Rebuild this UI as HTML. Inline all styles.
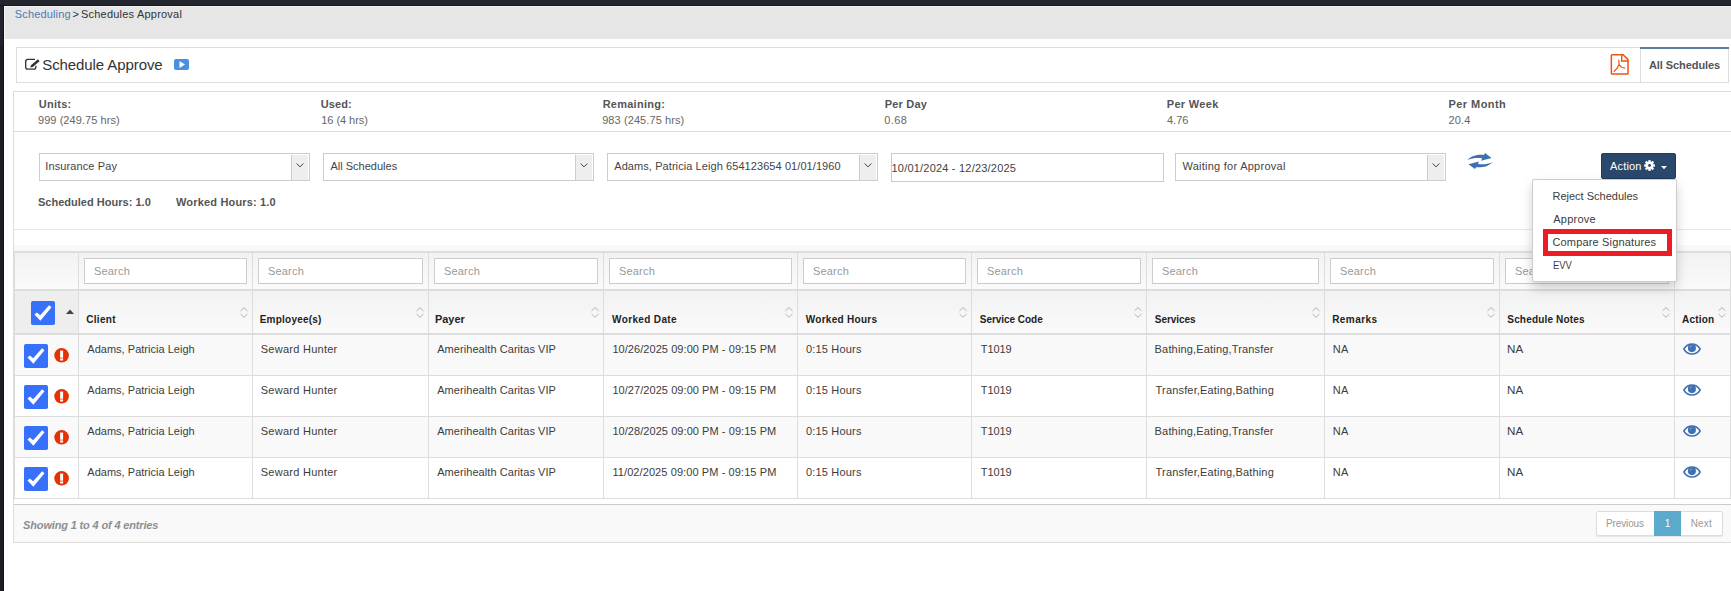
<!DOCTYPE html>
<html>
<head>
<meta charset="utf-8">
<title>Schedule Approve</title>
<style>
*{box-sizing:border-box;margin:0;padding:0}
svg{display:block}
html,body{width:1731px;height:591px;overflow:hidden;background:#fff}
body{font-family:"Liberation Sans",sans-serif;font-size:11px;color:#444;position:relative}
.abs{position:absolute}
.t{position:absolute;white-space:nowrap;line-height:1}
/* chrome */
#topbar{left:0;top:0;width:1731px;height:6px;background:#23262f;border-bottom:1px solid #13151d}
#leftbar{left:0;top:6px;width:4px;height:585px;background:#1b1d23;border-right:1px solid #10121a}
#leftbar2{left:0;top:6px;width:3px;height:40px;background:#20232c}
#crumb{left:4px;top:6px;width:1727px;height:33px;background:#e6e6e6;border-top:1px solid #f6f6f6;border-left:1px solid #f6f6f6}
/* title panel */
#titlep{left:16px;top:47px;width:1713px;height:36px;border:1px solid #ddd;background:#fff}
#tab{left:1640px;top:47px;width:89px;height:2px;background:#5d7f9d}
#tabl{left:1640px;top:49px;width:1px;height:33px;background:#ddd}
/* stats + filter panel */
#panel{left:13px;top:91px;width:1718px;height:452px;border-left:1px solid #ddd;border-top:1px solid #ddd}
.hl{position:absolute;height:1px;background:#ddd}
.b{font-weight:bold}
/* selects */
.sel{position:absolute;top:153px;height:28px;border:1px solid #ccc;background:#fff}
.sel .arr{position:absolute;right:1px;top:1px;width:18px;height:25px;background:#eee;border-left:1px solid #ccc}
.sel svg{position:absolute;left:5px;top:8px}
/* table */
#tbl{left:14px;top:245px}
.cell{position:absolute;border-right:1px solid #ddd}
.sin{position:absolute;top:258px;height:26px;border:1px solid #ccc;background:#fff}
.sort{position:absolute;top:306px}
</style>
</head>
<body>
<div id="topbar" class="abs"></div>
<div id="leftbar" class="abs"></div><div id="leftbar2" class="abs"></div>
<div id="crumb" class="abs"></div>
<div id="titlep" class="abs"></div>
<div id="tab" class="abs"></div><div id="tabl" class="abs"></div>
<div id="panel" class="abs"></div>
<div class="abs " style="left:14px;top:131px;width:1717px;height:1px;background:#ddd"></div>
<div class="abs " style="left:14px;top:229px;width:1717px;height:1px;background:#e7e7e7"></div>
<div class="abs " style="left:14px;top:245px;width:1717px;height:6px;background:#f9f9f9"></div>
<div class="abs " style="left:14px;top:251px;width:1717px;height:2px;background:#ddd"></div>
<div class="abs " style="left:14px;top:253px;width:1px;height:246px;background:#ddd"></div>
<div class="abs " style="left:15px;top:253px;width:1716px;height:36px;background:linear-gradient(#f2f2f2,#fafafa)"></div>
<div class="abs " style="left:14px;top:289px;width:1717px;height:2px;background:#ddd"></div>
<div class="abs " style="left:15px;top:291px;width:1716px;height:42px;background:linear-gradient(#f2f2f2,#fafafa)"></div>
<div class="abs " style="left:15px;top:291px;width:63px;height:42px;background:#eee"></div>
<div class="abs " style="left:14px;top:333px;width:1717px;height:2px;background:#ddd"></div>
<div class="abs " style="left:15px;top:335px;width:1716px;height:40px;background:#f9f9f9"></div>
<div class="abs " style="left:14px;top:375px;width:1717px;height:1px;background:#ddd"></div>
<div class="abs " style="left:15px;top:376px;width:1716px;height:40px;background:#fff"></div>
<div class="abs " style="left:14px;top:416px;width:1717px;height:1px;background:#ddd"></div>
<div class="abs " style="left:15px;top:417px;width:1716px;height:40px;background:#f9f9f9"></div>
<div class="abs " style="left:14px;top:457px;width:1717px;height:1px;background:#ddd"></div>
<div class="abs " style="left:15px;top:458px;width:1716px;height:40px;background:#fff"></div>
<div class="abs " style="left:14px;top:498px;width:1717px;height:1px;background:#ddd"></div>
<div class="abs " style="left:78px;top:253px;width:1px;height:245px;background:#ddd"></div>
<div class="abs " style="left:252px;top:253px;width:1px;height:245px;background:#ddd"></div>
<div class="abs " style="left:428px;top:253px;width:1px;height:245px;background:#ddd"></div>
<div class="abs " style="left:603px;top:253px;width:1px;height:245px;background:#ddd"></div>
<div class="abs " style="left:797px;top:253px;width:1px;height:245px;background:#ddd"></div>
<div class="abs " style="left:971px;top:253px;width:1px;height:245px;background:#ddd"></div>
<div class="abs " style="left:1146px;top:253px;width:1px;height:245px;background:#ddd"></div>
<div class="abs " style="left:1324px;top:253px;width:1px;height:245px;background:#ddd"></div>
<div class="abs " style="left:1499px;top:253px;width:1px;height:245px;background:#ddd"></div>
<div class="abs " style="left:1674px;top:253px;width:1px;height:245px;background:#ddd"></div>
<div class="abs " style="left:1730px;top:253px;width:1px;height:245px;background:#ddd"></div>
<div class="abs " style="left:84px;top:258px;width:163px;height:26px;border:1px solid #ccc;background:#fff"></div>
<div class="abs " style="left:258px;top:258px;width:165px;height:26px;border:1px solid #ccc;background:#fff"></div>
<div class="abs " style="left:434px;top:258px;width:164px;height:26px;border:1px solid #ccc;background:#fff"></div>
<div class="abs " style="left:609px;top:258px;width:183px;height:26px;border:1px solid #ccc;background:#fff"></div>
<div class="abs " style="left:803px;top:258px;width:163px;height:26px;border:1px solid #ccc;background:#fff"></div>
<div class="abs " style="left:977px;top:258px;width:164px;height:26px;border:1px solid #ccc;background:#fff"></div>
<div class="abs " style="left:1152px;top:258px;width:167px;height:26px;border:1px solid #ccc;background:#fff"></div>
<div class="abs " style="left:1330px;top:258px;width:164px;height:26px;border:1px solid #ccc;background:#fff"></div>
<div class="abs " style="left:1505px;top:258px;width:164px;height:26px;border:1px solid #ccc;background:#fff"></div>
<div class="abs" style="left:240px;top:306.5px;width:8px;height:11px;line-height:0"><svg width="8" height="11" viewBox="0 0 8 11"><path d="M0.5 3.9 L4 0.6 L7.5 3.9 M0.5 7 L4 10.3 L7.5 7" fill="none" stroke="#b4b4b4" stroke-width="1"/></svg></div>
<div class="abs" style="left:416px;top:306.5px;width:8px;height:11px;line-height:0"><svg width="8" height="11" viewBox="0 0 8 11"><path d="M0.5 3.9 L4 0.6 L7.5 3.9 M0.5 7 L4 10.3 L7.5 7" fill="none" stroke="#b4b4b4" stroke-width="1"/></svg></div>
<div class="abs" style="left:591px;top:306.5px;width:8px;height:11px;line-height:0"><svg width="8" height="11" viewBox="0 0 8 11"><path d="M0.5 3.9 L4 0.6 L7.5 3.9 M0.5 7 L4 10.3 L7.5 7" fill="none" stroke="#b4b4b4" stroke-width="1"/></svg></div>
<div class="abs" style="left:785px;top:306.5px;width:8px;height:11px;line-height:0"><svg width="8" height="11" viewBox="0 0 8 11"><path d="M0.5 3.9 L4 0.6 L7.5 3.9 M0.5 7 L4 10.3 L7.5 7" fill="none" stroke="#b4b4b4" stroke-width="1"/></svg></div>
<div class="abs" style="left:959px;top:306.5px;width:8px;height:11px;line-height:0"><svg width="8" height="11" viewBox="0 0 8 11"><path d="M0.5 3.9 L4 0.6 L7.5 3.9 M0.5 7 L4 10.3 L7.5 7" fill="none" stroke="#b4b4b4" stroke-width="1"/></svg></div>
<div class="abs" style="left:1134px;top:306.5px;width:8px;height:11px;line-height:0"><svg width="8" height="11" viewBox="0 0 8 11"><path d="M0.5 3.9 L4 0.6 L7.5 3.9 M0.5 7 L4 10.3 L7.5 7" fill="none" stroke="#b4b4b4" stroke-width="1"/></svg></div>
<div class="abs" style="left:1312px;top:306.5px;width:8px;height:11px;line-height:0"><svg width="8" height="11" viewBox="0 0 8 11"><path d="M0.5 3.9 L4 0.6 L7.5 3.9 M0.5 7 L4 10.3 L7.5 7" fill="none" stroke="#b4b4b4" stroke-width="1"/></svg></div>
<div class="abs" style="left:1487px;top:306.5px;width:8px;height:11px;line-height:0"><svg width="8" height="11" viewBox="0 0 8 11"><path d="M0.5 3.9 L4 0.6 L7.5 3.9 M0.5 7 L4 10.3 L7.5 7" fill="none" stroke="#b4b4b4" stroke-width="1"/></svg></div>
<div class="abs" style="left:1662px;top:306.5px;width:8px;height:11px;line-height:0"><svg width="8" height="11" viewBox="0 0 8 11"><path d="M0.5 3.9 L4 0.6 L7.5 3.9 M0.5 7 L4 10.3 L7.5 7" fill="none" stroke="#b4b4b4" stroke-width="1"/></svg></div>
<div class="abs" style="left:1718px;top:306.5px;width:8px;height:11px;line-height:0"><svg width="8" height="11" viewBox="0 0 8 11"><path d="M0.5 3.9 L4 0.6 L7.5 3.9 M0.5 7 L4 10.3 L7.5 7" fill="none" stroke="#b4b4b4" stroke-width="1"/></svg></div>
<div class="abs" style="left:66px;top:309px"><svg width="8" height="5" viewBox="0 0 8 5"><path d="M0 5 L4 0.5 L8 5 Z" fill="#444"/></svg></div>
<div class="abs" style="left:30.5px;top:301px"><svg width="24" height="24" viewBox="0 0 24 24"><rect width="24" height="24" rx="1.8" fill="#3770fb"/><path d="M3.5 13.5 L5.9 11.4 L9.2 14.3 L18.1 4.2 L20.5 6.2 L9.4 19.8 Z" fill="#fff"/></svg></div>
<div class="abs" style="left:24px;top:344px"><svg width="24" height="24" viewBox="0 0 24 24"><rect width="24" height="24" rx="1.8" fill="#3770fb"/><path d="M3.5 13.5 L5.9 11.4 L9.2 14.3 L18.1 4.2 L20.5 6.2 L9.4 19.8 Z" fill="#fff"/></svg></div>
<div class="abs" style="left:54px;top:348.3px"><svg width="15" height="15" viewBox="0 0 15 15"><circle cx="7.6" cy="7.3" r="7.3" fill="#e63200"/><rect x="6.1" y="2.6" width="3" height="7.1" fill="#fff"/><rect x="6.1" y="10.4" width="3" height="2.1" fill="#fff"/></svg></div>
<div class="abs" style="left:1683px;top:342.5px"><svg width="18" height="12" viewBox="0 0 18 12"><path d="M0.8 6 C3 2.3 6 0.9 9 0.9 C12 0.9 15 2.3 17.2 6 C15 9.7 12 11.1 9 11.1 C6 11.1 3 9.7 0.8 6 Z" fill="#fff" stroke="#3f70b2" stroke-width="1.5"/><circle cx="8.9" cy="5.1" r="4.05" fill="#3f70b2"/><path d="M6.9 4.9 A2.3 2.3 0 0 1 9 2.9" fill="none" stroke="#9db6d9" stroke-width="0.7"/></svg></div>
<div class="abs" style="left:24px;top:385px"><svg width="24" height="24" viewBox="0 0 24 24"><rect width="24" height="24" rx="1.8" fill="#3770fb"/><path d="M3.5 13.5 L5.9 11.4 L9.2 14.3 L18.1 4.2 L20.5 6.2 L9.4 19.8 Z" fill="#fff"/></svg></div>
<div class="abs" style="left:54px;top:389.3px"><svg width="15" height="15" viewBox="0 0 15 15"><circle cx="7.6" cy="7.3" r="7.3" fill="#e63200"/><rect x="6.1" y="2.6" width="3" height="7.1" fill="#fff"/><rect x="6.1" y="10.4" width="3" height="2.1" fill="#fff"/></svg></div>
<div class="abs" style="left:1683px;top:383.5px"><svg width="18" height="12" viewBox="0 0 18 12"><path d="M0.8 6 C3 2.3 6 0.9 9 0.9 C12 0.9 15 2.3 17.2 6 C15 9.7 12 11.1 9 11.1 C6 11.1 3 9.7 0.8 6 Z" fill="#fff" stroke="#3f70b2" stroke-width="1.5"/><circle cx="8.9" cy="5.1" r="4.05" fill="#3f70b2"/><path d="M6.9 4.9 A2.3 2.3 0 0 1 9 2.9" fill="none" stroke="#9db6d9" stroke-width="0.7"/></svg></div>
<div class="abs" style="left:24px;top:426px"><svg width="24" height="24" viewBox="0 0 24 24"><rect width="24" height="24" rx="1.8" fill="#3770fb"/><path d="M3.5 13.5 L5.9 11.4 L9.2 14.3 L18.1 4.2 L20.5 6.2 L9.4 19.8 Z" fill="#fff"/></svg></div>
<div class="abs" style="left:54px;top:430.3px"><svg width="15" height="15" viewBox="0 0 15 15"><circle cx="7.6" cy="7.3" r="7.3" fill="#e63200"/><rect x="6.1" y="2.6" width="3" height="7.1" fill="#fff"/><rect x="6.1" y="10.4" width="3" height="2.1" fill="#fff"/></svg></div>
<div class="abs" style="left:1683px;top:424.5px"><svg width="18" height="12" viewBox="0 0 18 12"><path d="M0.8 6 C3 2.3 6 0.9 9 0.9 C12 0.9 15 2.3 17.2 6 C15 9.7 12 11.1 9 11.1 C6 11.1 3 9.7 0.8 6 Z" fill="#fff" stroke="#3f70b2" stroke-width="1.5"/><circle cx="8.9" cy="5.1" r="4.05" fill="#3f70b2"/><path d="M6.9 4.9 A2.3 2.3 0 0 1 9 2.9" fill="none" stroke="#9db6d9" stroke-width="0.7"/></svg></div>
<div class="abs" style="left:24px;top:467px"><svg width="24" height="24" viewBox="0 0 24 24"><rect width="24" height="24" rx="1.8" fill="#3770fb"/><path d="M3.5 13.5 L5.9 11.4 L9.2 14.3 L18.1 4.2 L20.5 6.2 L9.4 19.8 Z" fill="#fff"/></svg></div>
<div class="abs" style="left:54px;top:471.3px"><svg width="15" height="15" viewBox="0 0 15 15"><circle cx="7.6" cy="7.3" r="7.3" fill="#e63200"/><rect x="6.1" y="2.6" width="3" height="7.1" fill="#fff"/><rect x="6.1" y="10.4" width="3" height="2.1" fill="#fff"/></svg></div>
<div class="abs" style="left:1683px;top:465.5px"><svg width="18" height="12" viewBox="0 0 18 12"><path d="M0.8 6 C3 2.3 6 0.9 9 0.9 C12 0.9 15 2.3 17.2 6 C15 9.7 12 11.1 9 11.1 C6 11.1 3 9.7 0.8 6 Z" fill="#fff" stroke="#3f70b2" stroke-width="1.5"/><circle cx="8.9" cy="5.1" r="4.05" fill="#3f70b2"/><path d="M6.9 4.9 A2.3 2.3 0 0 1 9 2.9" fill="none" stroke="#9db6d9" stroke-width="0.7"/></svg></div>
<div class="abs " style="left:14px;top:504px;width:1717px;height:1px;background:#ccc"></div>
<div class="abs " style="left:14px;top:505px;width:1717px;height:37px;background:#f9f9f9"></div>
<div class="abs " style="left:14px;top:542px;width:1717px;height:1px;background:#ddd"></div>
<div class="abs " style="left:1596px;top:511px;width:127px;height:25px;border:1px solid #ddd;border-radius:2px;background:#fff;box-shadow:0 1px 1px rgba(0,0,0,.08)"></div>
<div class="abs " style="left:1654px;top:511px;width:27px;height:25px;background:#5ba9cb"></div>
<div class="abs " style="left:39px;top:153px;width:271px;height:28px;border:1px solid #ccc;background:#fff"><div class="abs" style="right:1px;top:1px;width:17px;height:25px;background:#eee;border-left:1px solid #ccc"></div><div class="abs" style="right:5px;top:9px;width:8px;height:5px;line-height:0"><svg width="8" height="5" viewBox="0 0 8 5"><path d="M0.6 0.5 L4 3.9 L7.4 0.5" fill="none" stroke="#444" stroke-width="1"/></svg></div></div>
<div class="abs " style="left:323px;top:153px;width:271px;height:28px;border:1px solid #ccc;background:#fff"><div class="abs" style="right:1px;top:1px;width:17px;height:25px;background:#eee;border-left:1px solid #ccc"></div><div class="abs" style="right:5px;top:9px;width:8px;height:5px;line-height:0"><svg width="8" height="5" viewBox="0 0 8 5"><path d="M0.6 0.5 L4 3.9 L7.4 0.5" fill="none" stroke="#444" stroke-width="1"/></svg></div></div>
<div class="abs " style="left:607px;top:153px;width:271px;height:28px;border:1px solid #ccc;background:#fff"><div class="abs" style="right:1px;top:1px;width:17px;height:25px;background:#eee;border-left:1px solid #ccc"></div><div class="abs" style="right:5px;top:9px;width:8px;height:5px;line-height:0"><svg width="8" height="5" viewBox="0 0 8 5"><path d="M0.6 0.5 L4 3.9 L7.4 0.5" fill="none" stroke="#444" stroke-width="1"/></svg></div></div>
<div class="abs " style="left:1175px;top:153px;width:271px;height:28px;border:1px solid #ccc;background:#fff"><div class="abs" style="right:1px;top:1px;width:17px;height:25px;background:#eee;border-left:1px solid #ccc"></div><div class="abs" style="right:5px;top:9px;width:8px;height:5px;line-height:0"><svg width="8" height="5" viewBox="0 0 8 5"><path d="M0.6 0.5 L4 3.9 L7.4 0.5" fill="none" stroke="#444" stroke-width="1"/></svg></div></div>
<div class="abs " style="left:891px;top:153px;width:273px;height:29px;border:1px solid #ccc;background:#fff"></div>
<div class="abs" style="left:1467.5px;top:152.3px;line-height:0"><svg width="24" height="18" viewBox="0 0 24 18" style="overflow:visible"><g fill="#3f70b2"><path d="M-0.3 7.9 C3.6 3.5 10 2.4 15.9 3 L17 1.1 L23.6 6 L13 8.7 L14.1 6.2 C9 5.5 4.3 6 -0.3 7.9 Z"/><path d="M-0.3 7.9 C3.6 3.5 10 2.4 15.9 3 L17 1.1 L23.6 6 L13 8.7 L14.1 6.2 C9 5.5 4.3 6 -0.3 7.9 Z" transform="rotate(180 12 9.1)"/></g></svg></div>
<div class="abs " style="left:1601px;top:153px;width:75px;height:26px;background:#2a486c;border:1px solid #213b5c;border-radius:2px"><div class="abs" style="left:41.8px;top:6.4px;line-height:0"><svg width="11" height="11" viewBox="-5.5 -5.5 11 11"><g fill="#fff"><circle r="3.9"/><rect x="-1.15" y="-5.4" width="2.3" height="3" transform="rotate(0)"/><rect x="-1.15" y="-5.4" width="2.3" height="3" transform="rotate(45)"/><rect x="-1.15" y="-5.4" width="2.3" height="3" transform="rotate(90)"/><rect x="-1.15" y="-5.4" width="2.3" height="3" transform="rotate(135)"/><rect x="-1.15" y="-5.4" width="2.3" height="3" transform="rotate(180)"/><rect x="-1.15" y="-5.4" width="2.3" height="3" transform="rotate(225)"/><rect x="-1.15" y="-5.4" width="2.3" height="3" transform="rotate(270)"/><rect x="-1.15" y="-5.4" width="2.3" height="3" transform="rotate(315)"/></g><circle r="1.4" fill="#2a486c"/></svg></div><div class="abs" style="left:59px;top:12px;line-height:0"><svg width="6" height="4" viewBox="0 0 6 4"><path d="M0 0 H6 L3 3.2 Z" fill="#fff"/></svg></div></div>
<div class="abs " style="left:1532px;top:179px;width:145px;height:103px;background:#fff;border:1px solid #ccc;border-radius:2px;box-shadow:0 6px 12px rgba(0,0,0,.175);z-index:5"></div>
<div class="abs " style="left:1543px;top:229px;width:129px;height:27px;border:5px solid #ed1c24;z-index:6"></div>
<div class="abs" style="left:24px;top:57px;line-height:0"><svg width="17" height="14" viewBox="0 0 17 14"><path d="M11 2.45 H3.9 Q1.7 2.45 1.7 4.65 V9.95 Q1.7 12.15 3.9 12.15 H9.65 Q11.85 12.15 11.85 9.95 V8.8" fill="none" stroke="#333" stroke-width="1.3"/><path d="M15.6 4.3 L13.9 2.3 L7.2 7.9 L6.1 10.4 L8.8 9.9 Z" fill="#333"/></svg></div>
<div class="abs" style="left:174px;top:59.3px;line-height:0"><svg width="15" height="11" viewBox="0 0 15 11"><rect width="15" height="11" rx="2" fill="#4a90e2"/><path d="M5.5 2.1 L11 5.5 L5.5 8.9 Z" fill="#fff"/></svg></div>
<div class="abs" style="left:1610px;top:53px;line-height:0"><svg width="20" height="23" viewBox="0 0 20 23"><path d="M1.35 2.4 Q1.35 1.65 2.1 1.65 H13.1 L18.05 6.6 V20.3 Q18.05 21.05 17.3 21.05 H2.1 Q1.35 21.05 1.35 20.3 Z" fill="#fff" stroke="#ec5413" stroke-width="1.5"/><path d="M11.7 1.65 V8 H18.05" fill="none" stroke="#ec5413" stroke-width="1.4"/><path d="M8.7 7.2 C9.1 9 9.2 10.5 9 11.5 C8 14 6.5 16.5 4.2 18.3 M9 11.5 C10.5 14 12.5 14.8 15 15" fill="none" stroke="#ec5413" stroke-width="1.2" stroke-linecap="round"/></svg></div>
<div class="t" style="left:14.78px;top:9px;font-size:11px;color:#4a7ab5;letter-spacing:0.150px">Scheduling</div>
<div class="t" style="left:72.50px;top:9px;font-size:11px;color:#333;letter-spacing:0.000px">&gt;</div>
<div class="t" style="left:81.00px;top:9px;font-size:11px;color:#333;letter-spacing:0.212px">Schedules Approval</div>
<div class="t" style="left:42.25px;top:57px;font-size:15px;color:#333;letter-spacing:-0.090px">Schedule Approve</div>
<div class="t" style="left:1649.00px;top:60px;font-size:11px;color:#555;letter-spacing:-0.075px;font-weight:bold">All Schedules</div>
<div class="t" style="left:38.75px;top:99px;font-size:11px;color:#555;letter-spacing:0.270px;font-weight:bold">Units:</div>
<div class="t" style="left:38.00px;top:115px;font-size:11px;color:#666;letter-spacing:0.060px">999 (249.75 hrs)</div>
<div class="t" style="left:320.72px;top:99px;font-size:11px;color:#555;letter-spacing:0.113px;font-weight:bold">Used:</div>
<div class="t" style="left:321.25px;top:115px;font-size:11px;color:#666;letter-spacing:-0.050px">16 (4 hrs)</div>
<div class="t" style="left:602.66px;top:99px;font-size:11px;color:#555;letter-spacing:0.250px;font-weight:bold">Remaining:</div>
<div class="t" style="left:602.16px;top:115px;font-size:11px;color:#666;letter-spacing:0.090px">983 (245.75 hrs)</div>
<div class="t" style="left:884.66px;top:99px;font-size:11px;color:#555;letter-spacing:0.225px;font-weight:bold">Per Day</div>
<div class="t" style="left:884.22px;top:115px;font-size:11px;color:#666;letter-spacing:0.450px">0.68</div>
<div class="t" style="left:1166.72px;top:99px;font-size:11px;color:#555;letter-spacing:0.321px;font-weight:bold">Per Week</div>
<div class="t" style="left:1167.00px;top:115px;font-size:11px;color:#666;letter-spacing:-0.000px">4.76</div>
<div class="t" style="left:1448.44px;top:99px;font-size:11px;color:#555;letter-spacing:0.450px;font-weight:bold">Per Month</div>
<div class="t" style="left:1448.57px;top:115px;font-size:11px;color:#666;letter-spacing:0.150px">20.4</div>
<div class="t" style="left:45.25px;top:161px;font-size:11px;color:#444;letter-spacing:0.113px">Insurance Pay</div>
<div class="t" style="left:330.50px;top:161px;font-size:11px;color:#444;letter-spacing:0.000px">All Schedules</div>
<div class="t" style="left:614.25px;top:161px;font-size:11px;color:#444;letter-spacing:0.077px">Adams, Patricia Leigh 654123654 01/01/1960</div>
<div class="t" style="left:891.50px;top:163px;font-size:11px;color:#444;letter-spacing:0.205px">10/01/2024 - 12/23/2025</div>
<div class="t" style="left:1182.40px;top:161px;font-size:11px;color:#444;letter-spacing:0.261px">Waiting for Approval</div>
<div class="t" style="left:37.90px;top:197px;font-size:11px;color:#555;letter-spacing:0.024px;font-weight:bold">Scheduled Hours: 1.0</div>
<div class="t" style="left:176.00px;top:197px;font-size:11px;color:#555;letter-spacing:0.169px;font-weight:bold">Worked Hours: 1.0</div>
<div class="t" style="left:1610.00px;top:161px;font-size:11px;color:#fff;letter-spacing:0.180px">Action</div>
<div class="t" style="left:1552.47px;top:191px;font-size:11px;color:#3c3c3c;letter-spacing:0.000px;z-index:7">Reject Schedules</div>
<div class="t" style="left:1553.25px;top:214px;font-size:11px;color:#3c3c3c;letter-spacing:0.225px;z-index:7">Approve</div>
<div class="t" style="left:1552.47px;top:237px;font-size:11px;color:#3c3c3c;letter-spacing:0.159px;z-index:7">Compare Signatures</div>
<div class="t" style="left:1552.64px;top:260px;font-size:11px;color:#3c3c3c;transform:scaleX(0.857);transform-origin:0 0;z-index:7">EVV</div>
<div class="t" style="left:94.00px;top:266px;font-size:11px;color:#999;letter-spacing:0.180px">Search</div>
<div class="t" style="left:268.00px;top:266px;font-size:11px;color:#999;letter-spacing:0.180px">Search</div>
<div class="t" style="left:444.00px;top:266px;font-size:11px;color:#999;letter-spacing:0.180px">Search</div>
<div class="t" style="left:619.00px;top:266px;font-size:11px;color:#999;letter-spacing:0.180px">Search</div>
<div class="t" style="left:813.00px;top:266px;font-size:11px;color:#999;letter-spacing:0.180px">Search</div>
<div class="t" style="left:987.00px;top:266px;font-size:11px;color:#999;letter-spacing:0.180px">Search</div>
<div class="t" style="left:1162.00px;top:266px;font-size:11px;color:#999;letter-spacing:0.180px">Search</div>
<div class="t" style="left:1340.00px;top:266px;font-size:11px;color:#999;letter-spacing:0.180px">Search</div>
<div class="t" style="left:1515.00px;top:266px;font-size:11px;color:#999;letter-spacing:0.180px">Search</div>
<div class="t" style="left:86.34px;top:315px;font-size:10px;color:#222;letter-spacing:0.270px;font-weight:bold">Client</div>
<div class="t" style="left:259.72px;top:315px;font-size:10px;color:#222;letter-spacing:0.225px;font-weight:bold">Employee(s)</div>
<div class="t" style="left:434.89px;top:315px;font-size:10px;color:#222;transform:scaleX(1.092);transform-origin:0 0;font-weight:bold">Payer</div>
<div class="t" style="left:612.09px;top:315px;font-size:10px;color:#222;letter-spacing:0.360px;font-weight:bold">Worked Date</div>
<div class="t" style="left:805.72px;top:315px;font-size:10px;color:#222;letter-spacing:0.286px;font-weight:bold">Worked Hours</div>
<div class="t" style="left:979.84px;top:315px;font-size:10px;color:#222;letter-spacing:-0.041px;font-weight:bold">Service Code</div>
<div class="t" style="left:1154.81px;top:315px;font-size:10px;color:#222;letter-spacing:-0.064px;font-weight:bold">Services</div>
<div class="t" style="left:1332.20px;top:315px;font-size:10px;color:#222;letter-spacing:0.450px;font-weight:bold">Remarks</div>
<div class="t" style="left:1507.31px;top:315px;font-size:10px;color:#222;letter-spacing:0.173px;font-weight:bold">Schedule Notes</div>
<div class="t" style="left:1682.12px;top:315px;font-size:10px;color:#222;letter-spacing:0.180px;font-weight:bold">Action</div>
<div class="t" style="left:87.28px;top:344px;font-size:11px;color:#3c3c3c;letter-spacing:0.023px">Adams, Patricia Leigh</div>
<div class="t" style="left:260.78px;top:344px;font-size:11px;color:#3c3c3c;letter-spacing:0.262px">Seward Hunter</div>
<div class="t" style="left:437.22px;top:344px;font-size:11px;color:#3c3c3c;letter-spacing:0.061px">Amerihealth Caritas VIP</div>
<div class="t" style="left:612.38px;top:344px;font-size:11px;color:#3c3c3c;letter-spacing:0.062px">10/26/2025 09:00 PM - 09:15 PM</div>
<div class="t" style="left:805.88px;top:344px;font-size:11px;color:#3c3c3c;letter-spacing:0.200px">0:15 Hours</div>
<div class="t" style="left:980.84px;top:344px;font-size:11px;color:#3c3c3c;letter-spacing:-0.113px">T1019</div>
<div class="t" style="left:1154.62px;top:344px;font-size:11px;color:#3c3c3c;letter-spacing:0.164px">Bathing,Eating,Transfer</div>
<div class="t" style="left:1332.69px;top:344px;font-size:11px;color:#3c3c3c;letter-spacing:0.450px">NA</div>
<div class="t" style="left:1507.16px;top:344px;font-size:11px;color:#3c3c3c;transform:scaleX(1.057);transform-origin:0 0">NA</div>
<div class="t" style="left:87.28px;top:385px;font-size:11px;color:#3c3c3c;letter-spacing:0.023px">Adams, Patricia Leigh</div>
<div class="t" style="left:260.78px;top:385px;font-size:11px;color:#3c3c3c;letter-spacing:0.262px">Seward Hunter</div>
<div class="t" style="left:437.22px;top:385px;font-size:11px;color:#3c3c3c;letter-spacing:0.061px">Amerihealth Caritas VIP</div>
<div class="t" style="left:612.38px;top:385px;font-size:11px;color:#3c3c3c;letter-spacing:0.062px">10/27/2025 09:00 PM - 09:15 PM</div>
<div class="t" style="left:805.88px;top:385px;font-size:11px;color:#3c3c3c;letter-spacing:0.200px">0:15 Hours</div>
<div class="t" style="left:980.84px;top:385px;font-size:11px;color:#3c3c3c;letter-spacing:-0.113px">T1019</div>
<div class="t" style="left:1155.62px;top:385px;font-size:11px;color:#3c3c3c;letter-spacing:0.164px">Transfer,Eating,Bathing</div>
<div class="t" style="left:1332.69px;top:385px;font-size:11px;color:#3c3c3c;letter-spacing:0.450px">NA</div>
<div class="t" style="left:1507.16px;top:385px;font-size:11px;color:#3c3c3c;transform:scaleX(1.057);transform-origin:0 0">NA</div>
<div class="t" style="left:87.28px;top:426px;font-size:11px;color:#3c3c3c;letter-spacing:0.023px">Adams, Patricia Leigh</div>
<div class="t" style="left:260.78px;top:426px;font-size:11px;color:#3c3c3c;letter-spacing:0.262px">Seward Hunter</div>
<div class="t" style="left:437.22px;top:426px;font-size:11px;color:#3c3c3c;letter-spacing:0.061px">Amerihealth Caritas VIP</div>
<div class="t" style="left:612.38px;top:426px;font-size:11px;color:#3c3c3c;letter-spacing:0.062px">10/28/2025 09:00 PM - 09:15 PM</div>
<div class="t" style="left:805.88px;top:426px;font-size:11px;color:#3c3c3c;letter-spacing:0.200px">0:15 Hours</div>
<div class="t" style="left:980.84px;top:426px;font-size:11px;color:#3c3c3c;letter-spacing:-0.113px">T1019</div>
<div class="t" style="left:1154.62px;top:426px;font-size:11px;color:#3c3c3c;letter-spacing:0.164px">Bathing,Eating,Transfer</div>
<div class="t" style="left:1332.69px;top:426px;font-size:11px;color:#3c3c3c;letter-spacing:0.450px">NA</div>
<div class="t" style="left:1507.16px;top:426px;font-size:11px;color:#3c3c3c;transform:scaleX(1.057);transform-origin:0 0">NA</div>
<div class="t" style="left:87.28px;top:467px;font-size:11px;color:#3c3c3c;letter-spacing:0.023px">Adams, Patricia Leigh</div>
<div class="t" style="left:260.78px;top:467px;font-size:11px;color:#3c3c3c;letter-spacing:0.262px">Seward Hunter</div>
<div class="t" style="left:437.22px;top:467px;font-size:11px;color:#3c3c3c;letter-spacing:0.061px">Amerihealth Caritas VIP</div>
<div class="t" style="left:612.38px;top:467px;font-size:11px;color:#3c3c3c;letter-spacing:0.093px">11/02/2025 09:00 PM - 09:15 PM</div>
<div class="t" style="left:805.88px;top:467px;font-size:11px;color:#3c3c3c;letter-spacing:0.200px">0:15 Hours</div>
<div class="t" style="left:980.84px;top:467px;font-size:11px;color:#3c3c3c;letter-spacing:-0.113px">T1019</div>
<div class="t" style="left:1155.62px;top:467px;font-size:11px;color:#3c3c3c;letter-spacing:0.164px">Transfer,Eating,Bathing</div>
<div class="t" style="left:1332.69px;top:467px;font-size:11px;color:#3c3c3c;letter-spacing:0.450px">NA</div>
<div class="t" style="left:1507.16px;top:467px;font-size:11px;color:#3c3c3c;transform:scaleX(1.057);transform-origin:0 0">NA</div>
<div class="t" style="left:23.10px;top:520px;font-size:11px;color:#8e8e8e;letter-spacing:-0.156px;font-weight:bold;font-style:italic">Showing 1 to 4 of 4 entries</div>
<div class="t" style="left:1606.00px;top:519px;font-size:10px;color:#999;letter-spacing:-0.129px">Previous</div>
<div class="t" style="left:1664.75px;top:519px;font-size:10px;color:#fff;letter-spacing:0.000px">1</div>
<div class="t" style="left:1690.75px;top:519px;font-size:10px;color:#999;letter-spacing:0.150px">Next</div>
</body>
</html>
